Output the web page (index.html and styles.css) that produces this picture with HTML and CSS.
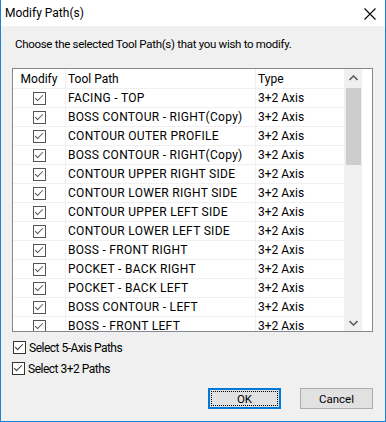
FILE: index.html
```html
<!DOCTYPE html>
<html lang="en">
<head>
  <meta charset="UTF-8">
  <title>Modify Path(s)</title>
  <link rel="stylesheet" href="styles.css">
</head>
<body>
  <div class="window">
    <!-- Title bar -->
    <div class="titlebar">
      <span class="title">Modify Path(s)</span>
      <svg class="close" width="12" height="12" viewBox="0 0 12 12">
        <path d="M0.5 0.5 L11.5 11.5 M11.5 0.5 L0.5 11.5" stroke="#000" stroke-width="1.1" fill="none"/>
      </svg>
    </div>

    <div class="content">
      <p class="prompt">Choose the selected Tool Path(s) that you wish to modify.</p>

      <div class="listbox">
        <div class="grid">
          <div class="row head">
            <div class="cell center">Modify</div>
            <div class="cell">Tool Path</div>
            <div class="cell">Type</div>
          </div>
          <div id="rows"></div>
        </div>
        <div class="scrollbar">
          <div class="arrow">
            <svg width="9" height="6" viewBox="0 0 9 6"><path d="M0.5 5 L4.5 1 L8.5 5" stroke="#606060" stroke-width="1.6" fill="none"/></svg>
          </div>
          <div class="track"><div class="thumb"></div></div>
          <div class="arrow">
            <svg width="9" height="6" viewBox="0 0 9 6"><path d="M0.5 1 L4.5 5 L8.5 1" stroke="#606060" stroke-width="1.6" fill="none"/></svg>
          </div>
        </div>
      </div>

      <div class="options">
        <label class="option"><span class="box dark"></span><span>Select 5-Axis Paths</span></label>
        <label class="option second"><span class="box dark"></span><span>Select 3+2 Paths</span></label>
      </div>

      <div class="buttons">
        <button class="btn default"><span class="focus">OK</span></button>
        <button class="btn">Cancel</button>
      </div>
    </div>
  </div>

  <script>
    // Tool paths visible in the list
    const paths = [
      'FACING - TOP',
      'BOSS CONTOUR - RIGHT(Copy)',
      'CONTOUR OUTER PROFILE',
      'BOSS CONTOUR - RIGHT(Copy)',
      'CONTOUR UPPER RIGHT SIDE',
      'CONTOUR LOWER RIGHT SIDE',
      'CONTOUR UPPER LEFT SIDE',
      'CONTOUR LOWER LEFT SIDE',
      'BOSS - FRONT RIGHT',
      'POCKET - BACK RIGHT',
      'POCKET - BACK LEFT',
      'BOSS CONTOUR - LEFT',
      'BOSS - FRONT LEFT'
    ];

    const rows = document.getElementById('rows');
    paths.forEach(name => {
      const row = document.createElement('div');
      row.className = 'row';
      row.innerHTML =
        '<div class="cell center"><span class="box"></span></div>' +
        '<div class="cell name">' + name + '</div>' +
        '<div class="cell">3+2 Axis</div>';
      rows.appendChild(row);
    });
  </script>
</body>
</html>
```

FILE: styles.css
```css
body {
  margin: 0;
  font-family: Roboto, "Noto Sans", sans-serif;
  font-size: 12px;
  color: #000;
}
.window {
  width: 386px;
  height: 422px;
  box-sizing: border-box;
  border: 1px solid #1883d7;
  border-top: none;
  background-color: #f0f0f0;
  display: flex;
  flex-direction: column;
}
.titlebar {
  height: 26px;
  background-color: white;
  display: flex;
  align-items: center;
  justify-content: space-between;
  padding: 0 9px 0 4px;
}
.title {
  margin-top: -1px;
}
.close {
  margin-top: 2px;
}
.content {
  flex: 1;
  display: flex;
  flex-direction: column;
  padding: 0 12px 0 11px;
}
.prompt {
  margin: 10px 0 0 3px;
  font-size: 11.5px;
  letter-spacing: -0.3px;
  line-height: 16px;
}
.listbox {
  margin-top: 16px;
  height: 264px;
  box-sizing: border-box;
  border: 1px solid #828790;
  background-color: white;
  display: flex;
  overflow: hidden;
}
.grid {
  width: 332px;
  overflow: hidden;
}
.row {
  display: grid;
  grid-template-columns: 53px 190px 89px;
  height: 19px;
}
.row.head {
  height: 20px;
}
.cell {
  border-right: 1px solid #f0f0f0;
  border-bottom: 1px solid #f0f0f0;
  padding-left: 2px;
  display: flex;
  align-items: center;
  white-space: nowrap;
  overflow: hidden;
}
.cell.name {
  letter-spacing: 0.3px;
}
.cell.center {
  justify-content: center;
  padding-left: 0;
}
.box {
  width: 13px;
  height: 13px;
  box-sizing: border-box;
  border: 1px solid #555;
  background-color: white;
  position: relative;
  flex-shrink: 0;
}
.box::after {
  content: "";
  position: absolute;
  left: 3px;
  top: 0px;
  width: 3px;
  height: 7px;
  border-right: 1px solid #555;
  border-bottom: 1px solid #555;
  transform: rotate(45deg);
}
.box.dark {
  border-color: #333;
}
.box.dark::after {
  border-color: #333;
}
.scrollbar {
  width: 17px;
  background-color: #f0f0f0;
  display: flex;
  flex-direction: column;
}
.arrow {
  height: 17px;
  display: flex;
  align-items: center;
  justify-content: center;
}
.track {
  flex: 1;
  padding: 2px 1px 0 1px;
}
.thumb {
  height: 77px;
  background-color: #cdcdcd;
}
.options {
  margin-top: 5px;
  padding-left: 1px;
  letter-spacing: -0.5px;
}
.option {
  height: 21px;
  display: flex;
  align-items: center;
  gap: 3px;
}
.option.second {
  margin-left: -1px;
}
.buttons {
  display: flex;
  justify-content: flex-end;
  gap: 19px;
  margin-top: 9px;
}
.btn {
  width: 73px;
  height: 21px;
  box-sizing: border-box;
  background-color: #e1e1e1;
  border: 1px solid #adadad;
  font-family: inherit;
  font-size: 11.5px;
  color: #000;
  padding: 0;
}
.btn.default {
  border: 2px solid #0078d7;
  padding: 1px;
}
.focus {
  display: flex;
  align-items: center;
  justify-content: center;
  height: 100%;
  box-sizing: border-box;
  border: 1px dotted #000;
}
```
